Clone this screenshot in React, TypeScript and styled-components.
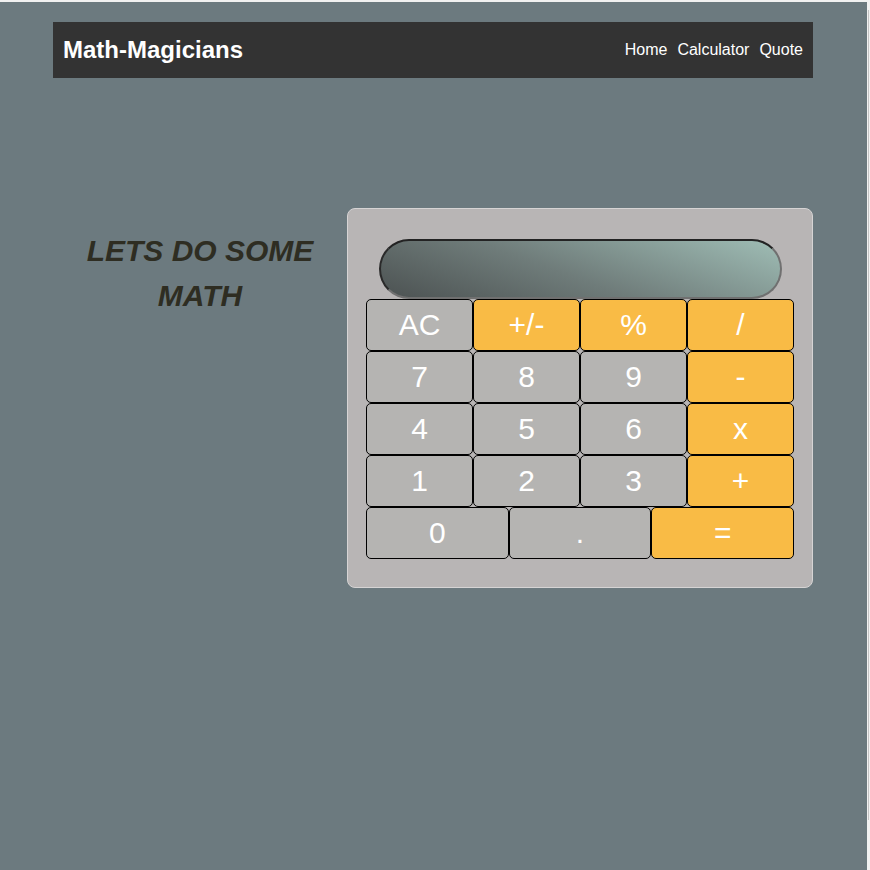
import React from "react";
import styled, { createGlobalStyle } from "styled-components";

const Global = createGlobalStyle`
  html, body { margin: 0; padding: 0; background: #f1f1f1; }
  body { font-family: "Liberation Sans", Arial, sans-serif; overflow: hidden; }
`;

const Page = styled.div`
  margin-top: 2px;
  width: 867px;
  min-height: 868px;
  background: #6c7a7f;
  padding-top: 20px;
  box-sizing: border-box;
`;

const ScrollTrack = styled.div`
  position: fixed;
  top: 10px;
  left: 868px;
  width: 1px;
  height: 810px;
  background: #c4c4c4;
`;

const Nav = styled.nav`
  width: 760px;
  height: 56px;
  margin: 0 0 0 53px;
  background: #333333;
  display: flex;
  align-items: center;
  justify-content: space-between;
  padding: 0 10px;
  box-sizing: border-box;
`;

const Brand = styled.h1`
  margin: 0;
  font-size: 24px;
  font-weight: 700;
  color: #ffffff;
`;

const Links = styled.ul`
  list-style: none;
  margin: 0;
  padding: 0;
  display: flex;
  gap: 10px;
`;

const LinkItem = styled.li`
  font-size: 16px;
  color: #ffffff;
`;

const Main = styled.main`
  width: 760px;
  margin: 130px 0 0 53px;
  display: flex;
  align-items: flex-start;
`;

const Intro = styled.section`
  width: 294px;
  padding-top: 20px;
`;

const Heading = styled.h2`
  margin: 0;
  text-align: center;
  font-size: 30px;
  line-height: 45px;
  font-style: italic;
  font-weight: 700;
  color: #2e2d22;
`;

const Panel = styled.div`
  width: 466px;
  box-sizing: border-box;
  background: #b8b5b5;
  border: 1px solid #d6d4d4;
  border-radius: 8px;
  padding: 30px 18px 28px;
  display: flex;
  flex-direction: column;
  align-items: center;
`;

const Display = styled.div`
  width: 403px;
  height: 60px;
  box-sizing: border-box;
  border-radius: 30px;
  border-style: solid;
  border-width: 2px;
  border-color: #232323 #707070 #707070 #2a2a2a;
  background: linear-gradient(20deg, #4c5252 0%, #6f7c7a 45%, #9fbdb5 100%);
`;

const Grid = styled.div<{ $cols: number }>`
  width: 428px;
  display: grid;
  grid-template-columns: repeat(${(p) => p.$cols}, 1fr);
`;

const Key = styled.button<{ $op?: boolean }>`
  height: 52px;
  box-sizing: border-box;
  border: 1px solid #000000;
  border-radius: 5px;
  background: ${(p) => (p.$op ? "#f9bb45" : "#b5b4b2")};
  color: #ffffff;
  font-family: "Liberation Sans", Arial, sans-serif;
  font-size: 30px;
  padding: 0;
  margin: 0;
  cursor: pointer;
`;

const rows: string[][] = [
  ["AC", "+/-", "%", "/"],
  ["7", "8", "9", "-"],
  ["4", "5", "6", "x"],
  ["1", "2", "3", "+"],
];

const ops = new Set(["+/-", "%", "/", "-", "x", "+", "="]);

export default function App() {
  return (
    <>
      <Global />
      <ScrollTrack />
      <Page>
        <Nav>
          <Brand>Math-Magicians</Brand>
          <Links>
            <LinkItem>Home</LinkItem>
            <LinkItem>Calculator</LinkItem>
            <LinkItem>Quote</LinkItem>
          </Links>
        </Nav>
        <Main>
          <Intro>
            <Heading>
              LETS DO SOME
              <br />
              MATH
            </Heading>
          </Intro>
          <Panel>
            <Display />
            <Grid $cols={4}>
              {rows.flat().map((k) => (
                <Key key={k} $op={ops.has(k)}>
                  {k}
                </Key>
              ))}
            </Grid>
            <Grid $cols={3}>
              {["0", ".", "="].map((k) => (
                <Key key={k} $op={ops.has(k)}>
                  {k}
                </Key>
              ))}
            </Grid>
          </Panel>
        </Main>
      </Page>
    </>
  );
}
